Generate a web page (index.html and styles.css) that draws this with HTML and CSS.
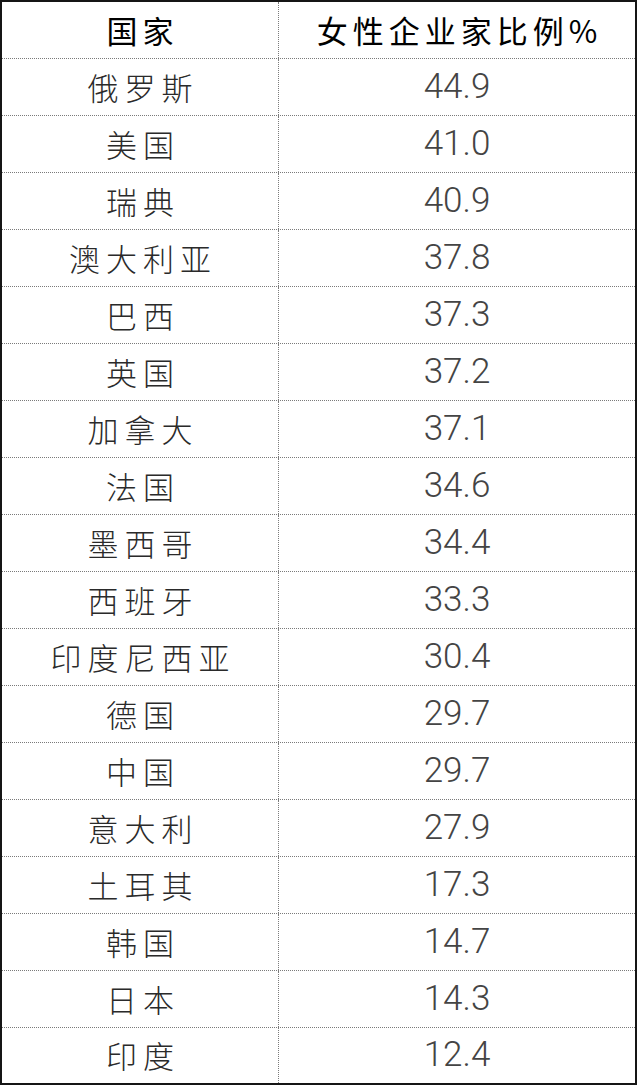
FILE: index.html
```html
<!DOCTYPE html>
<html lang="zh-CN">
<head>
<meta charset="utf-8">
<title>女性企业家比例</title>
<link rel="stylesheet" href="styles.css">
</head>
<body>
<div class="table">
  <div class="row head"><div class="c1">国家</div><div class="c2">女性企业家比例%</div></div>
  <div class="row"><div class="c1">俄罗斯</div><div class="c2">44.9</div></div>
  <div class="row"><div class="c1">美国</div><div class="c2">41.0</div></div>
  <div class="row"><div class="c1">瑞典</div><div class="c2">40.9</div></div>
  <div class="row"><div class="c1">澳大利亚</div><div class="c2">37.8</div></div>
  <div class="row"><div class="c1">巴西</div><div class="c2">37.3</div></div>
  <div class="row"><div class="c1">英国</div><div class="c2">37.2</div></div>
  <div class="row"><div class="c1">加拿大</div><div class="c2">37.1</div></div>
  <div class="row"><div class="c1">法国</div><div class="c2">34.6</div></div>
  <div class="row"><div class="c1">墨西哥</div><div class="c2">34.4</div></div>
  <div class="row"><div class="c1">西班牙</div><div class="c2">33.3</div></div>
  <div class="row"><div class="c1">印度尼西亚</div><div class="c2">30.4</div></div>
  <div class="row"><div class="c1">德国</div><div class="c2">29.7</div></div>
  <div class="row"><div class="c1">中国</div><div class="c2">29.7</div></div>
  <div class="row"><div class="c1">意大利</div><div class="c2">27.9</div></div>
  <div class="row"><div class="c1">土耳其</div><div class="c2">17.3</div></div>
  <div class="row"><div class="c1">韩国</div><div class="c2">14.7</div></div>
  <div class="row"><div class="c1">日本</div><div class="c2">14.3</div></div>
  <div class="row last"><div class="c1">印度</div><div class="c2">12.4</div></div>
</div>
</body>
</html>
```
FILE: styles.css
```css
html, body {
  margin: 0;
  padding: 0;
  background: #ffffff;
}
.table {
  box-sizing: border-box;
  width: 637px;
  height: 1085px;
  border: 2px solid #151515;
  display: flex;
  flex-direction: column;
}
.row {
  box-sizing: border-box;
  height: 57px;
  flex: 0 0 57px;
  display: flex;
  border-bottom: 1px dotted #7a7a7a;
}
.row.last {
  border-bottom: none;
  flex: 1 1 auto;
}
.c1, .c2 {
  box-sizing: border-box;
  display: flex;
  align-items: center;
  justify-content: center;
  white-space: nowrap;
  padding-bottom: 2px;
}
.c1 {
  width: 277px;
  border-right: 1px dotted #7a7a7a;
  font-family: "Noto Sans CJK SC", sans-serif;
  font-size: 31px;
  font-weight: 300;
  letter-spacing: 6px;
  padding-left: 6px;
  color: #2a2a2a;
}
.c2 {
  flex: 1 1 auto;
  font-family: Roboto, "Liberation Sans", sans-serif;
  font-weight: 300;
  font-size: 35px;
  color: #444444;
}
.head .c1, .head .c2 {
  font-family: "Noto Sans CJK SC", sans-serif;
  font-size: 31px;
  font-weight: 400;
  color: #000;
  letter-spacing: 5px;
  padding-left: 5px;
}
```
